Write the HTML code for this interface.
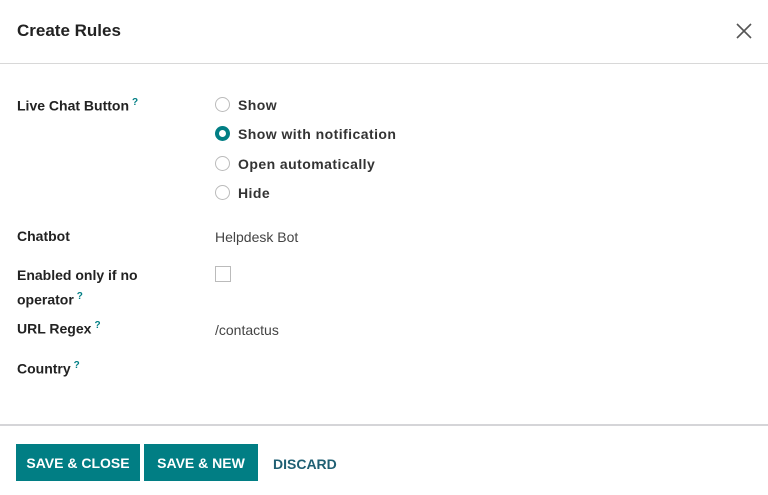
<!DOCTYPE html>
<html><head><meta charset="utf-8"><style>
body{margin:0;width:768px;height:495px;background:#fff;font-family:"Liberation Sans",sans-serif;color:#374151;position:relative;overflow:hidden}
.a{position:absolute;white-space:nowrap}
.lbl{font-size:14px;font-weight:bold;color:#222}
sup{font-size:10px;color:#017e84;font-weight:bold;margin-left:3px}
.val{font-size:14px;color:#444}
.r{position:absolute;width:13px;height:13px;border:1px solid #bbb;border-radius:50%;background:#fff}
.rt{position:absolute;font-size:14px;color:#333;font-weight:bold;letter-spacing:0.45px}
.btn{position:absolute;top:444px;height:37px;background:#017e84;color:#fff;font-size:14px;font-weight:bold;line-height:39px;text-align:center}
</style></head><body>
<div class="a" style="left:17px;top:21px;font-size:17px;font-weight:bold;color:#222">Create Rules</div>
<svg class="a" style="left:736px;top:23px" width="16" height="16"><path d="M1 1L15 15M15 1L1 15" stroke="#555" stroke-width="1.6"/></svg>
<div class="a" style="left:0;top:63px;width:768px;height:1px;background:#d8d8d8"></div>

<div class="a lbl" style="left:17px;top:97px">Live Chat Button<sup>?</sup></div>
<div class="r" style="left:215px;top:97px"></div><div class="rt" style="left:238px;top:97px">Show</div>
<div class="r" style="left:215px;top:126px;border:4px solid #017e84;width:7px;height:7px"></div><div class="rt" style="left:238px;top:126px">Show with notification</div>
<div class="r" style="left:215px;top:156px"></div><div class="rt" style="left:238px;top:156px">Open automatically</div>
<div class="r" style="left:215px;top:185px"></div><div class="rt" style="left:238px;top:185px">Hide</div>

<div class="a lbl" style="left:17px;top:228px">Chatbot</div>
<div class="a val" style="left:215px;top:229px">Helpdesk Bot</div>
<div class="a lbl" style="left:17px;top:267px">Enabled only if no</div>
<div class="a lbl" style="left:17px;top:291px">operator<sup>?</sup></div>
<div class="a" style="left:215px;top:266px;width:14px;height:14px;border:1px solid #bbb"></div>
<div class="a lbl" style="left:17px;top:320px">URL Regex<sup>?</sup></div>
<div class="a val" style="left:215px;top:322px">/contactus</div>
<div class="a lbl" style="left:17px;top:360px">Country<sup>?</sup></div>

<div class="a" style="left:0;top:424px;width:768px;height:2px;background:#d5d5d8"></div>
<div class="btn" style="left:16px;width:124px">SAVE &amp; CLOSE</div>
<div class="btn" style="left:144px;width:114px">SAVE &amp; NEW</div>
<div class="a" style="left:273px;top:456px;font-size:14px;font-weight:bold;color:#1f5f73">DISCARD</div>
</body></html>
